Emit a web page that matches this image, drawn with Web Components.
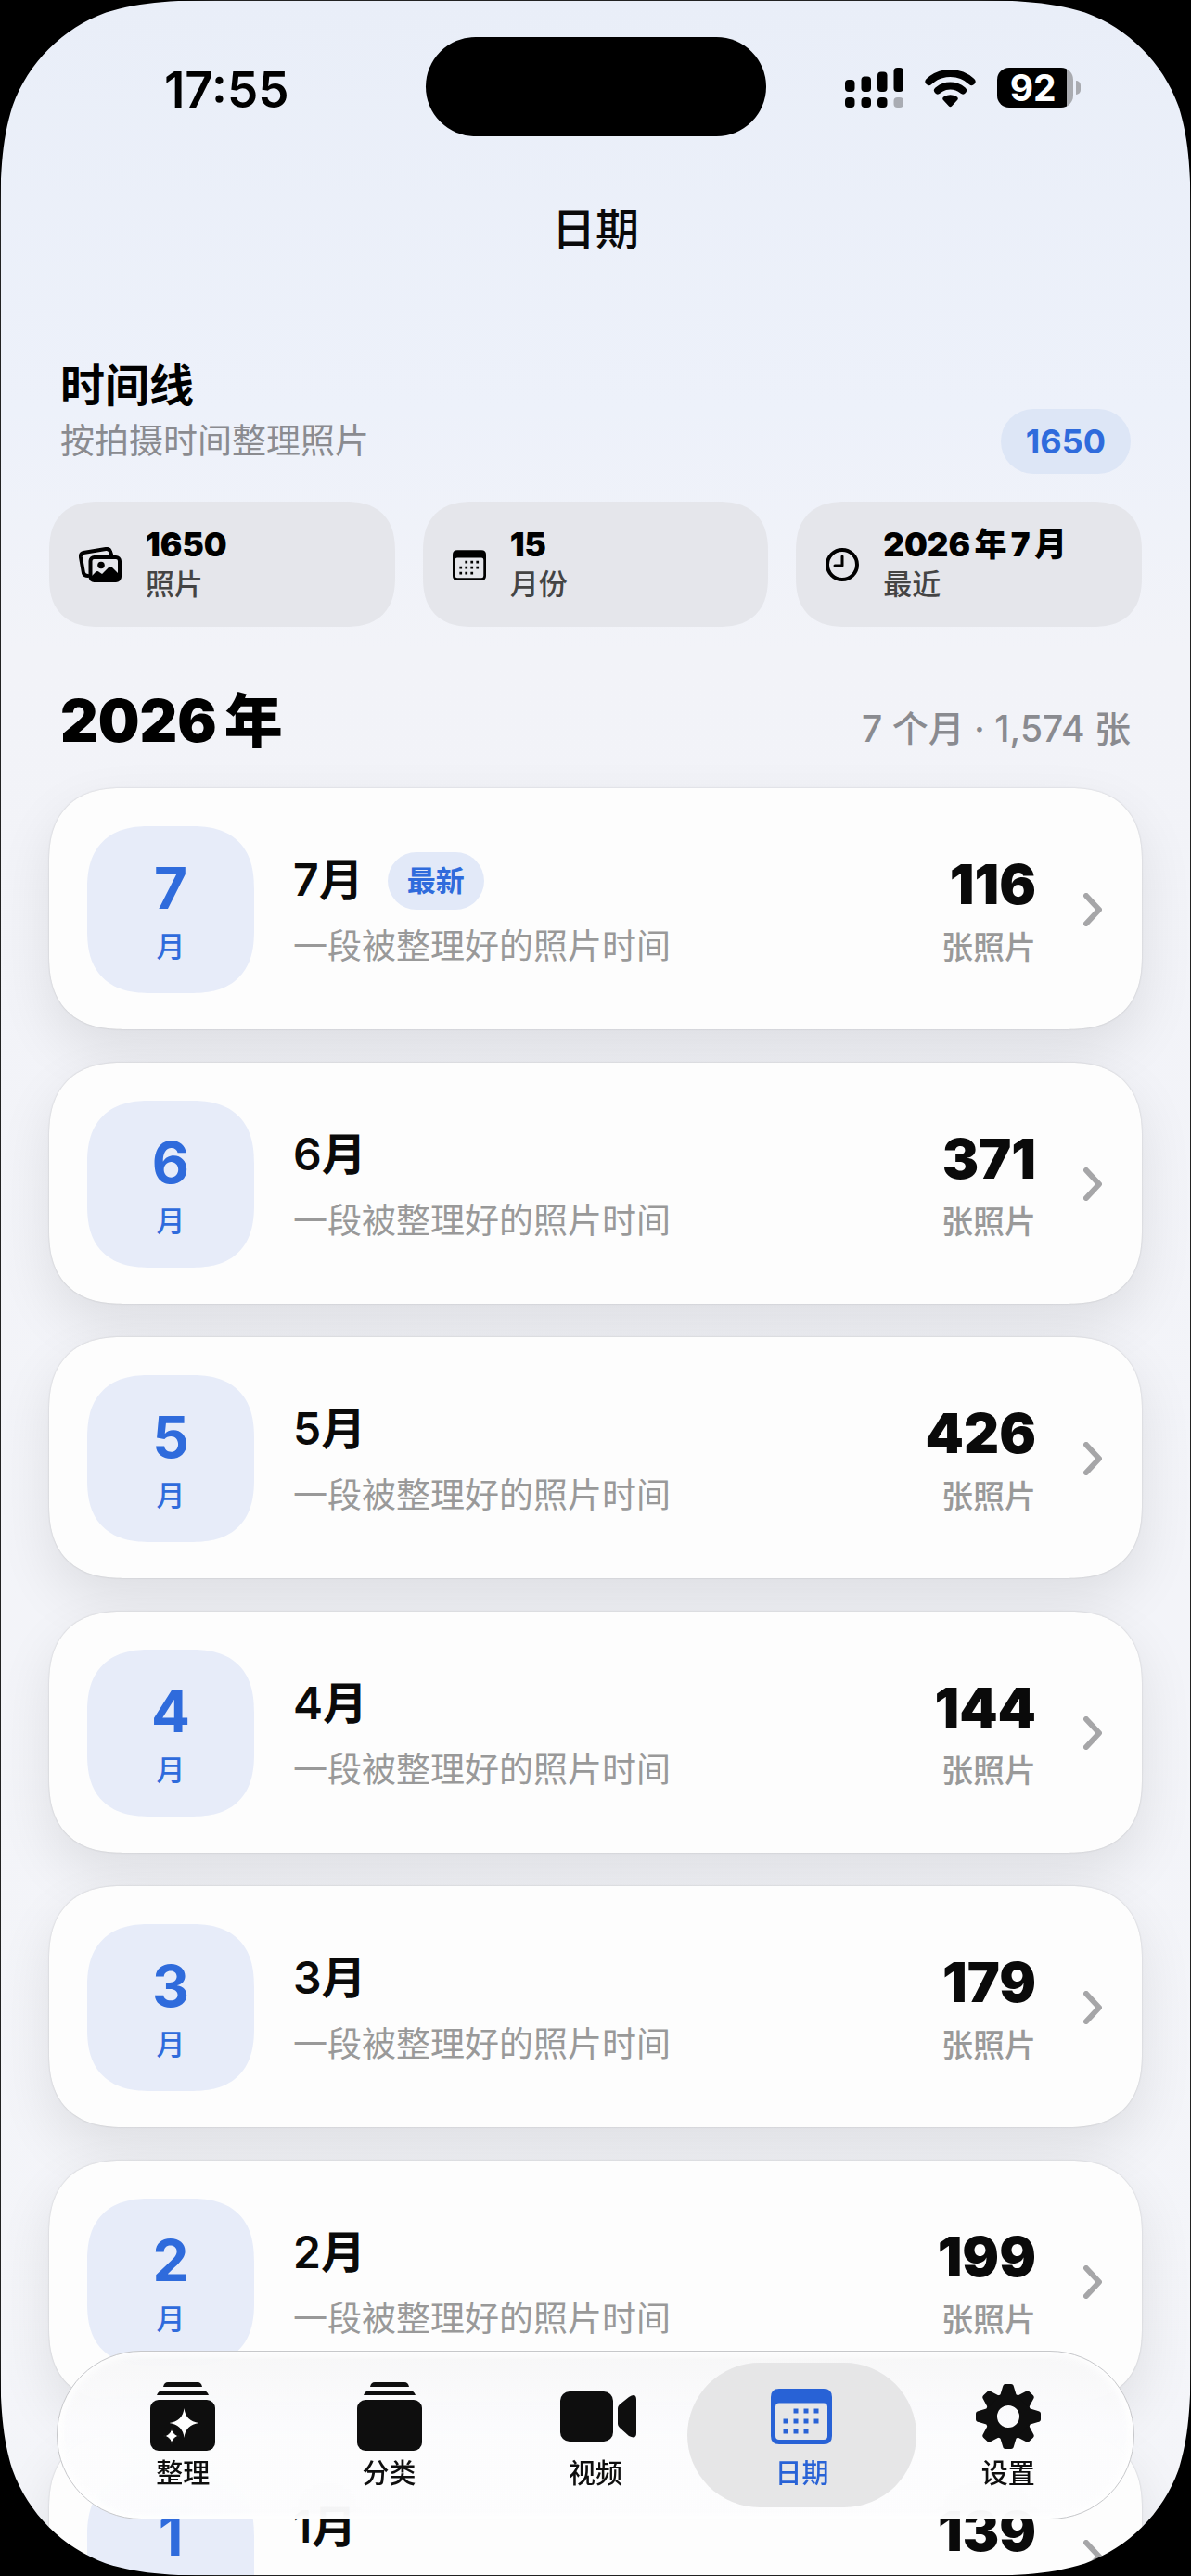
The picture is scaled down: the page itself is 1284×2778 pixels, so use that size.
<!DOCTYPE html>
<html lang="zh-CN">
<head>
<meta charset="utf-8">
<meta name="viewport" content="width=device-width, initial-scale=1">
<title>日期</title>
<style>
  html, body {
    margin: 0;
    height: 100%;
    background: #000;
  }

  body {
    --blue: #2f6bdc;
    --blue-soft: #e7ecf9;
    --ink: #0a0a0a;
    --muted: #999;
    font-family: Inter, "Noto Sans CJK SC", sans-serif;
    color: var(--ink);
  }
</style>
</head>
<body>
<photo-shell>
  <status-bar slot="top" time="17:55" battery="92"></status-bar>
  <h1 slot="title">日期</h1>

  <section-head count="1650">
    时间线
    <span slot="sub">按拍摄时间整理照片</span>
  </section-head>

  <stat-row>
    <stat-card icon="photos" label="照片">1650</stat-card>
    <stat-card icon="calendar" label="月份">15</stat-card>
    <stat-card icon="clock" label="最近">2026年7月</stat-card>
  </stat-row>

  <year-group year="2026年" summary="7 个月 · 1,574 张">
    <month-card month="7" count="116" latest></month-card>
    <month-card month="6" count="371"></month-card>
    <month-card month="5" count="426"></month-card>
    <month-card month="4" count="144"></month-card>
    <month-card month="3" count="179"></month-card>
    <month-card month="2" count="199"></month-card>
    <month-card month="1" count="139"></month-card>
  </year-group>

  <tab-bar slot="tabs">
    <tab-item icon="sparkles">整理</tab-item>
    <tab-item icon="stack">分类</tab-item>
    <tab-item icon="video">视频</tab-item>
    <tab-item icon="calendar" active>日期</tab-item>
    <tab-item icon="gear">设置</tab-item>
  </tab-bar>
</photo-shell>

<script>
const STACK = `
  <path d="M14 5Q15 0 19 0H51Q55 0 56 5Z"/>
  <path d="M7 14Q9 9 13 9H57Q61 9 63 14Z"/>
  <rect x="0" y="19" width="70" height="55" rx="9"/>`;

const ICONS = {
  photos: {
    box: "0 0 46 38",
    body: `
      <path d="M10 31Q6 31 5 28L2 11Q1.500 7 5 6L29 2Q33 1.500 34 5L35 8" fill="none" stroke="currentColor" stroke-width="4" stroke-linecap="round"/>
      <rect x="12.500" y="11" width="31.500" height="25" rx="4" fill="none" stroke="currentColor" stroke-width="4"/>
      <circle cx="24" cy="19.500" r="3.800"/>
      <path d="M13 32L18 27Q20 25 22 27L25 29L32 22Q34 20 36 22L44 30V36H13Z"/>`,
  },
  calendar: {
    box: "0 0 66 60",
    body: `
      <path fill-rule="evenodd" d="M9 0H57Q66 0 66 9V51Q66 60 57 60H9Q0 60 0 51V9Q0 0 9 0ZM9 15.500Q5 15.500 5 19.500V51Q5 55 9 55H57Q61 55 61 51V19.500Q61 15.500 57 15.500Z"/>
      <path d="M27 21.500v5M38 21.500v5M49 21.500v5M16 32.500v5M27 32.500v5M38 32.500v5M49 32.500v5M16 43.500v5M27 43.500v5M38 43.500v5" stroke="currentColor" stroke-width="5"/>`,
  },
  clock: {
    box: "0 0 36 36",
    body: `
      <circle cx="18" cy="18" r="16" fill="none" stroke="currentColor" stroke-width="4"/>
      <path d="M18 9V19H10" fill="none" stroke="currentColor" stroke-width="3" stroke-linecap="round" stroke-linejoin="round"/>`,
  },
  stack: { box: "0 0 70 74", body: STACK },
  sparkles: {
    box: "0 0 70 74",
    body: `${STACK}
      <path fill="#fff" d="M36.500 28Q38 42 52.500 44Q38 46 36.500 60Q35 46 20.500 44Q35 42 36.500 28Z"/>
      <path fill="#fff" stroke="currentColor" stroke-width="1" d="M23 49Q24 57 31.500 58Q24 59 23 67Q22 59 14.500 58Q22 57 23 49Z"/>`,
  },
  video: {
    box: "-6 0 88 54",
    body: `
      <rect x="0" y="0" width="57" height="54" rx="10"/>
      <path d="M62 18Q62 16 64 14L74 6Q82 1 82 9V45Q82 52 74 48L64 39Q62 37 62 35Z"/>`,
  },
  gear: {
    box: "-35 -35 70 70",
    body: `
      <circle r="18.500" fill="none" stroke="currentColor" stroke-width="13"/>
      ${[0, 45, 90, 135, 180, 225, 270, 315]
        .map((a) => `<path transform="rotate(${a})" d="M-9 -22L-6 -32Q-5.500 -35 -3 -35H3Q5.500 -35 6 -32L9 -22Z"/>`)
        .join("")}`,
  },
  chevron: {
    box: "0 0 20 36",
    body: `<path d="M3 3L17 18L3 33" fill="none" stroke="currentColor" stroke-width="6" stroke-linecap="round" stroke-linejoin="round"/>`,
  },
  signal: {
    box: "0 0 63 43",
    body: `
      <rect x="0" y="13" width="10.500" height="13" rx="4"/>
      <rect x="17.500" y="9.500" width="10.500" height="16.500" rx="4"/>
      <rect x="35" y="4.500" width="10.500" height="21.500" rx="4"/>
      <rect x="52.500" y="0" width="10.500" height="26" rx="4"/>
      <rect x="0" y="32" width="10.500" height="11" rx="4"/>
      <rect x="17.500" y="32" width="10.500" height="11" rx="4"/>
      <rect x="35" y="32" width="10.500" height="11" rx="4"/>
      <rect x="52.500" y="32" width="10.500" height="11" rx="4" opacity=".28"/>`,
  },
  wifi: {
    box: "0 0 55 42",
    body: `
      <path d="M4.500 14Q14 5 27.500 5T50.500 14M14 23.500Q20 18.500 27.500 18.500T41 23.500" fill="none" stroke="currentColor" stroke-width="8" stroke-linecap="round"/>
      <path d="M20 34Q18 31.500 21 30Q27.500 26.500 34 30Q37 31.500 35 34L29 40.500Q27.500 42 26 40.500Z"/>`,
  },
};

class UiIcon extends HTMLElement {
  connectedCallback() {
    const { box, body } = ICONS[this.getAttribute("name")];
    this.attachShadow({ mode: "open" }).innerHTML = `
      <style>
        :host { display: block; flex: none; }
        svg { display: block; width: 100%; height: 100%; fill: currentColor; }
      </style>
      <svg viewBox="${box}" aria-hidden="true">${body}</svg>
    `;
  }
}

class PhotoShell extends HTMLElement {
  constructor() {
    super();
    this.attachShadow({ mode: "open" });
    // continuous corner, in hundredths of the radius
    const corner = `<svg class="corner" viewBox="0 0 153 153" aria-hidden="true"><path d="M0 0H153C108.800 0 86.800 0 63.100 7.500C37.300 16.900 16.900 37.300 7.500 63.100C0 86.800 0 108.800 0 153Z"/></svg>`;
    this.shadowRoot.innerHTML = `
      <style>
        :host {
          display: block;
          position: relative;
          height: 100vh;
          overflow: hidden;
          background: linear-gradient(#e9eef8 0, #edf1fa 440px, #f2f3f8 700px, #f4f5f9 100%);
        }

        .scroll {
          height: 100%;
          overflow-y: auto;
          scrollbar-width: none;
        }

        .nav {
          display: flex;
          justify-content: center;
          align-items: center;
          height: 120px;
          margin-top: 40px;
        }

        ::slotted(h1) {
          margin: 0;
          font-size: 47px;
          font-weight: 500;
          line-height: 60px;
        }

        main { padding: 79px 53px 280px; }

        .frame {
          position: absolute;
          inset: 0;
          border: 1px solid #222;
          pointer-events: none;
        }

        .corner {
          position: absolute;
          width: 277px;
          height: 277px;
        }

        .corner:nth-child(1) { top: -1px; left: -1px; }
        .corner:nth-child(2) { top: -1px; right: -1px; transform: scaleX(-1); }
        .corner:nth-child(3) { bottom: -1px; left: -1px; transform: scaleY(-1); }
        .corner:nth-child(4) { bottom: -1px; right: -1px; transform: scale(-1); }
      </style>
      <div class="scroll">
        <slot name="top"></slot>
        <header class="nav"><slot name="title"></slot></header>
        <main><slot></slot></main>
      </div>
      <slot name="tabs"></slot>
      <div class="frame">${corner.repeat(4)}</div>
    `;
  }
}

class StatusBar extends HTMLElement {
  connectedCallback() {
    this.attachShadow({ mode: "open" }).innerHTML = `
      <style>
        :host {
          display: grid;
          grid-template-columns: 1fr 367px 1fr;
          align-items: center;
          padding-top: 40px;
          color: #000;
        }

        .time {
          padding: 6px 0 0 30px;
          text-align: center;
          font-size: 53px;
          font-weight: 600;
          line-height: 60px;
        }

        .island {
          height: 107px;
          border-radius: 54px;
          background: #000;
        }

        .icons {
          display: flex;
          justify-content: center;
          align-items: center;
          gap: 23px;
          padding: 2px 34px 0 0;
        }

        .signal { width: 63px; height: 43px; }
        .wifi { width: 55px; height: 42px; }

        .battery {
          position: relative;
          width: 82px;
          margin-right: 8px;
          border-radius: 13px;
          background: linear-gradient(90deg, #000 75px, #a9abb0 75px);
          color: #fff;
          text-align: center;
          font-size: 39px;
          font-weight: 700;
          line-height: 43px;
        }

        .battery::after {
          content: "";
          position: absolute;
          top: 14px;
          right: -8px;
          width: 5px;
          height: 15px;
          border-radius: 0 8px 8px 0;
          background: #a9abb0;
        }

        .level { padding-right: 4px; }
      </style>
      <div class="time">${this.getAttribute("time")}</div>
      <div class="island"></div>
      <div class="icons">
        <ui-icon class="signal" name="signal"></ui-icon>
        <ui-icon class="wifi" name="wifi"></ui-icon>
        <div class="battery"><div class="level">${this.getAttribute("battery")}</div></div>
      </div>
    `;
  }
}

class SectionHead extends HTMLElement {
  connectedCallback() {
    this.attachShadow({ mode: "open" }).innerHTML = `
      <style>
        :host {
          display: flex;
          justify-content: space-between;
          align-items: flex-end;
          padding: 0 12px;
        }

        h2 {
          margin: 0;
          color: #000;
          font-size: 48px;
          font-weight: 700;
          line-height: 60px;
        }

        p {
          margin: 7px 0 12px;
          color: #8a8b90;
          font-size: 37px;
          line-height: 46px;
        }

        .count {
          padding: 0 27px;
          border-radius: 35px;
          background: #dde6f6;
          color: var(--blue);
          font-size: 36px;
          font-weight: 700;
          line-height: 70px;
        }
      </style>
      <div>
        <h2><slot></slot></h2>
        <p><slot name="sub"></slot></p>
      </div>
      <span class="count">${this.getAttribute("count")}</span>
    `;
  }
}

class StatRow extends HTMLElement {
  constructor() {
    super();
    this.attachShadow({ mode: "open" }).innerHTML = `
      <style>
        :host {
          display: grid;
          grid-template-columns: repeat(3, 1fr);
          gap: 30px;
          margin-top: 30px;
        }
      </style>
      <slot></slot>
    `;
  }
}

class StatCard extends HTMLElement {
  connectedCallback() {
    this.attachShadow({ mode: "open" }).innerHTML = `
      <style>
        :host {
          display: flex;
          align-items: center;
          gap: 26px;
          padding: 25px 32px 24px;
          border-radius: 54px;
          corner-shape: superellipse(1.3);
          background: #e5e6eb;
        }

        ui-icon { color: #000; }
        .photos { width: 46px; height: 38px; }
        .calendar { width: 36px; height: 33px; }
        .clock { width: 36px; height: 36px; }

        .value {
          color: #000;
          font-size: 35px;
          font-weight: 900;
          line-height: 42px;
          white-space: nowrap;
          text-autospace: normal;
        }

        .label {
          color: #444;
          font-size: 31px;
          font-weight: 500;
          line-height: 44px;
        }
      </style>
      <ui-icon class="${this.getAttribute("icon")}" name="${this.getAttribute("icon")}"></ui-icon>
      <div>
        <div class="value"><slot></slot></div>
        <div class="label">${this.getAttribute("label")}</div>
      </div>
    `;
  }
}

class YearGroup extends HTMLElement {
  connectedCallback() {
    this.attachShadow({ mode: "open" }).innerHTML = `
      <style>
        :host { display: block; margin-top: 61px; }

        header {
          display: flex;
          justify-content: space-between;
          align-items: baseline;
          padding: 0 12px;
          margin-bottom: 33px;
        }

        h2 {
          margin: 0;
          color: #000;
          font-size: 63px;
          font-weight: 900;
          line-height: 80px;
          text-autospace: normal;
        }

        .summary {
          color: #8a8b90;
          font-size: 39px;
          font-weight: 500;
          line-height: 44px;
        }

        .list { display: grid; gap: 36px; }
      </style>
      <header>
        <h2>${this.getAttribute("year")}</h2>
        <span class="summary">${this.getAttribute("summary")}</span>
      </header>
      <div class="list"><slot></slot></div>
    `;
  }
}

class MonthCard extends HTMLElement {
  connectedCallback() {
    const month = this.getAttribute("month");
    this.attachShadow({ mode: "open" }).innerHTML = `
      <style>
        :host { display: block; }

        a {
          display: flex;
          align-items: center;
          padding: 41px 43px 39px 41px;
          border-radius: 80px;
          corner-shape: superellipse(1.3);
          background: #fdfdfd;
          box-shadow: 0 0 2px rgba(0, 0, 0, 0.18), 0 24px 60px rgba(0, 0, 0, 0.09);
          color: inherit;
          text-decoration: none;
        }

        .tile {
          display: flex;
          flex-direction: column;
          justify-content: center;
          gap: 7px;
          box-sizing: border-box;
          width: 180px;
          height: 180px;
          margin-right: 42px;
          border-radius: 68px;
          corner-shape: superellipse(1.3);
          background: var(--blue-soft);
          color: var(--blue);
          text-align: center;
        }

        .num { font-size: 62px; font-weight: 700; line-height: 72px; }
        .unit { font-size: 31px; font-weight: 500; line-height: 40px; }

        .text { flex: 1; }

        .name {
          display: flex;
          align-items: center;
          gap: 26px;
          height: 62px;
          margin-bottom: 18px;
          font-size: 48px;
          font-weight: 600;
        }

        .month {
          padding-bottom: 2px;
          line-height: 54px;
        }

        .latest {
          padding: 0 21px;
          border-radius: 31px;
          background: #e2e9f8;
          color: var(--blue);
          font-size: 31px;
          font-weight: 700;
          line-height: 62px;
        }

        .note {
          color: var(--muted);
          font-size: 37px;
          line-height: 44px;
        }

        .count { text-align: right; }

        .total {
          margin-bottom: 10px;
          font-size: 59px;
          font-weight: 900;
          line-height: 72px;
        }

        .label {
          color: var(--muted);
          font-size: 34px;
          font-weight: 500;
          line-height: 44px;
        }

        ui-icon {
          width: 20px;
          height: 36px;
          margin-left: 51px;
          color: #a6a6a8;
        }
      </style>
      <a href="#month-${month}">
        <div class="tile">
          <span class="num">${month}</span>
          <span class="unit">月</span>
        </div>
        <div class="text">
          <div class="name"><span class="month">${month}月</span>${this.hasAttribute("latest") ? '<span class="latest">最新</span>' : ""}</div>
          <div class="note">一段被整理好的照片时间</div>
        </div>
        <div class="count">
          <div class="total">${this.getAttribute("count")}</div>
          <div class="label">张照片</div>
        </div>
        <ui-icon name="chevron"></ui-icon>
      </a>
    `;
  }
}

class TabBar extends HTMLElement {
  constructor() {
    super();
    this.attachShadow({ mode: "open" }).innerHTML = `
      <style>
        :host {
          position: absolute;
          left: 61px;
          right: 61px;
          bottom: 61px;
        }

        nav {
          display: grid;
          grid-template-columns: repeat(5, 1fr);
          padding: 12px 24px;
          border: 1px solid #c6c7ca;
          border-radius: 91px;
          background: linear-gradient(rgba(246, 246, 247, 0.92), rgba(252, 252, 253, 0.92) 45%);
          box-shadow: inset 0 0 8px 3px #fff;
          backdrop-filter: blur(30px);
        }
      </style>
      <nav><slot></slot></nav>
    `;
  }

  connectedCallback() {
    this.addEventListener("click", this.#select);
  }

  disconnectedCallback() {
    this.removeEventListener("click", this.#select);
  }

  #select = (event) => {
    const item = event.target.closest("tab-item");
    if (!item) return;
    this.querySelectorAll("tab-item").forEach((tab) => tab.toggleAttribute("active", tab === item));
  };
}

class TabItem extends HTMLElement {
  connectedCallback() {
    const icon = this.getAttribute("icon");
    this.attachShadow({ mode: "open" }).innerHTML = `
      <style>
        :host { display: block; margin: 0 -12px; }

        button {
          display: flex;
          flex-direction: column;
          align-items: center;
          gap: 7px;
          width: 100%;
          padding: 20px 0 19px;
          border: 0;
          border-radius: 78px;
          background: none;
          color: #0e0e0e;
          font: inherit;
          font-size: 29px;
          font-weight: 500;
          line-height: 34px;
        }

        :host([active]) button {
          background: #e6e6e7;
          color: #2862d6;
        }

        .icon {
          display: flex;
          align-items: center;
          height: 76px;
        }

        .stack, .sparkles { width: 70px; height: 74px; }
        .video { width: 88px; height: 54px; }
        .calendar { width: 66px; height: 60px; }
        .gear { width: 70px; height: 70px; }
      </style>
      <button type="button">
        <span class="icon"><ui-icon class="${icon}" name="${icon}"></ui-icon></span>
        <span><slot></slot></span>
      </button>
    `;
  }
}

customElements.define("ui-icon", UiIcon);
customElements.define("photo-shell", PhotoShell);
customElements.define("status-bar", StatusBar);
customElements.define("section-head", SectionHead);
customElements.define("stat-row", StatRow);
customElements.define("stat-card", StatCard);
customElements.define("year-group", YearGroup);
customElements.define("month-card", MonthCard);
customElements.define("tab-bar", TabBar);
customElements.define("tab-item", TabItem);
</script>
</body>
</html>
